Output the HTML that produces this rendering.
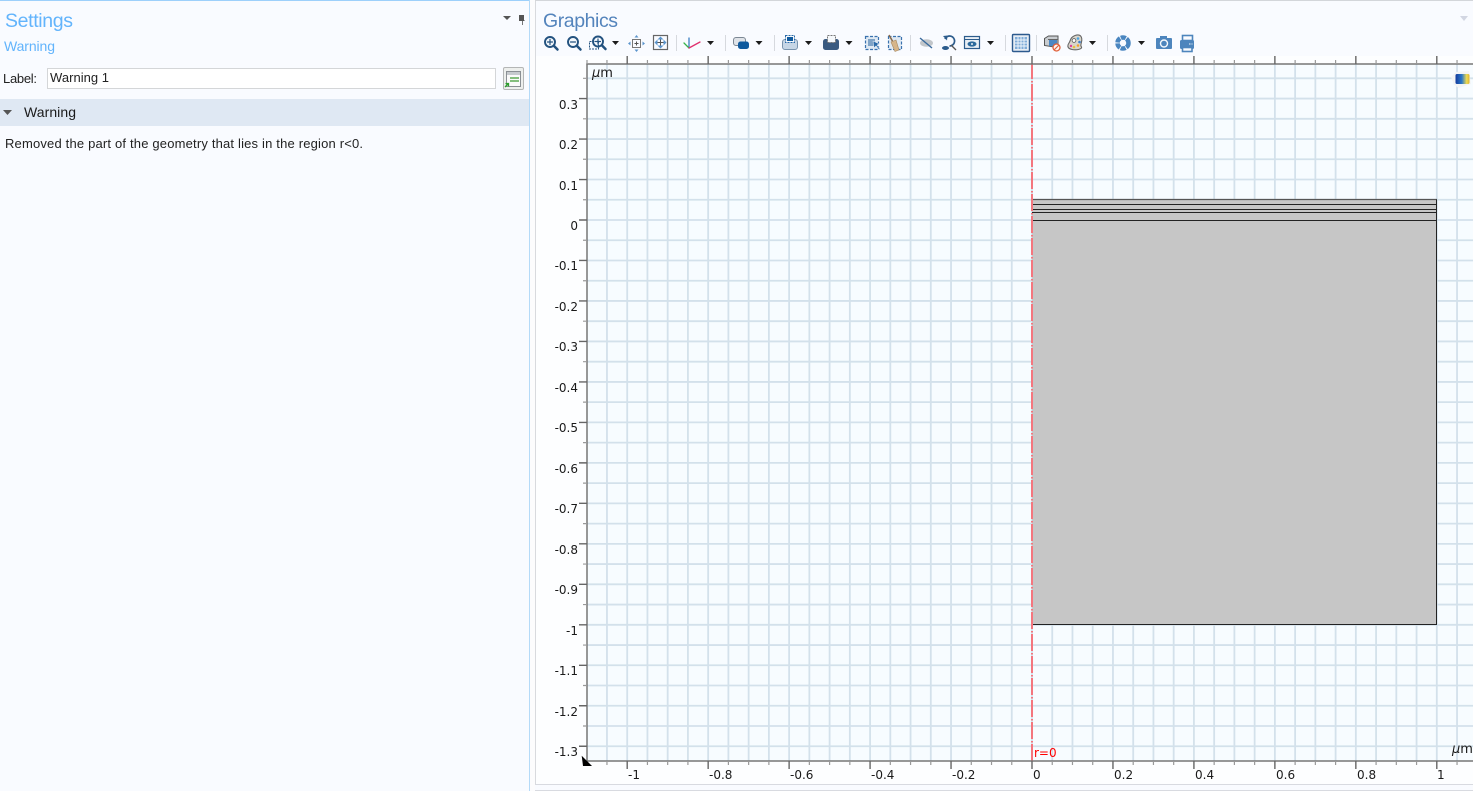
<!DOCTYPE html>
<html><head><meta charset="utf-8"><title>Settings / Graphics</title>
<style>
html,body{margin:0;padding:0;background:#f9fbff;overflow:hidden}
svg{display:block}
.s{font-family:"Liberation Sans",sans-serif}
.d{font-family:"DejaVu Sans",sans-serif;font-size:12px;fill:#1a1a1a}
</style></head><body>
<svg width="1473" height="791" viewBox="0 0 1473 791" xmlns="http://www.w3.org/2000/svg">
<defs><linearGradient id="lg" x1="0" x2="1" y1="0" y2="0"><stop offset="0" stop-color="#123a9c"/><stop offset=".45" stop-color="#2a78c8"/><stop offset=".8" stop-color="#f0dc50"/><stop offset="1" stop-color="#d8b030"/></linearGradient></defs>
<rect width="1473" height="791" fill="#f9fbff"/>
<!-- left panel -->
<rect x="0" y="0" width="530" height="1" fill="#9dd0fb"/>
<rect x="529" y="0" width="1" height="791" fill="#b4daf8"/>
<rect x="530" y="0" width="5" height="791" fill="#fcfcfd"/>
<text class="s" x="5" y="27" font-size="19.5" fill="#62b4fc" textLength="68">Settings</text>
<text class="s" x="4" y="51" font-size="14" fill="#62b4fc" textLength="51">Warning</text>
<text class="s" x="3" y="83" font-size="13" fill="#222" textLength="34">Label:</text>
<rect x="47.500" y="68.500" width="448" height="20" fill="#fff" stroke="#d4d6d8"/>
<text class="s" x="50" y="82" font-size="13" fill="#222" textLength="59">Warning 1</text>
<rect x="503.500" y="67.500" width="20" height="22" rx="1.500" fill="#edefed" stroke="#b4b6b6"/>
<rect x="506.500" y="71.500" width="14" height="15" fill="#fafafa" stroke="#8a8f94"/>
<rect x="507" y="72" width="13" height="3" fill="#c6cace"/>
<path d="M510 78h9M510 81h9" stroke="#3f9a33" stroke-width="1.200"/>
<path d="M505 87l3-3M505.500 83.500h3v3" stroke="#2ca02c" stroke-width="1.300" fill="none"/>
<path d="M503 16h8l-4 4z" fill="#555"/>
<path d="M519 15h5v5l1 1h-2.200v4h-.8v-4h-3z" fill="#555"/>
<rect x="0" y="99" width="529" height="27" fill="#dfe8f3"/>
<path d="M3 110h9l-4.500 5z" fill="#555"/>
<text class="s" x="24" y="117" font-size="14" fill="#1a1a1a" textLength="52">Warning</text>
<text class="s" x="5" y="148" font-size="13" fill="#222" textLength="358">Removed the part of the geometry that lies in the region r&lt;0.</text>

<!-- right panel -->
<rect x="535" y="0" width="938" height="1" fill="#d3d6da"/>
<rect x="536" y="56" width="937" height="728" fill="#fdfeff"/>
<rect x="535" y="1" width="1" height="784" fill="#d8dade"/>
<rect x="535" y="784" width="938" height="1" fill="#d8dae0"/>
<rect x="535" y="790" width="938" height="1" fill="#d8dae0"/>
<text class="s" x="543" y="27" font-size="19.500" fill="#5484bc" textLength="75">Graphics</text>
<path d="M1460 16h8l-4 5z" fill="#d2d6e2"/>

<!-- plot -->
<rect x="587" y="64" width="886" height="697" fill="#f7fcff"/>
<path fill="none" stroke="#d3e1eb" stroke-width="1.800" d="M606.96 64V761M627.2 64V761M647.44 64V761M667.68 64V761M687.92 64V761M708.16 64V761M728.4 64V761M748.64 64V761M768.88 64V761M789.12 64V761M809.36 64V761M829.6 64V761M849.84 64V761M870.08 64V761M890.32 64V761M910.56 64V761M930.8 64V761M951.04 64V761M971.28 64V761M991.52 64V761M1011.76 64V761M1052.24 64V761M1072.48 64V761M1092.72 64V761M1112.96 64V761M1133.2 64V761M1153.44 64V761M1173.68 64V761M1193.92 64V761M1214.16 64V761M1234.4 64V761M1254.64 64V761M1274.88 64V761M1295.12 64V761M1315.36 64V761M1335.6 64V761M1355.84 64V761M1376.08 64V761M1396.32 64V761M1416.56 64V761M1436.8 64V761M1457.04 64V761M1032 64V761
M587 78.32H1473M587 98.56H1473M587 118.8H1473M587 139.04H1473M587 159.28H1473M587 179.52H1473M587 199.76H1473M587 220H1473M587 240.24H1473M587 260.48H1473M587 280.72H1473M587 300.96H1473M587 321.2H1473M587 341.44H1473M587 361.68H1473M587 381.92H1473M587 402.16H1473M587 422.4H1473M587 442.64H1473M587 462.88H1473M587 483.12H1473M587 503.36H1473M587 523.6H1473M587 543.84H1473M587 564.08H1473M587 584.32H1473M587 604.56H1473M587 624.8H1473M587 645.04H1473M587 665.28H1473M587 685.52H1473M587 705.76H1473M587 726H1473M587 746.24H1473"/>

<!-- geometry -->
<rect x="1032" y="199.500" width="404.500" height="425" fill="#c6c6c6"/>
<path d="M1032 199.500H1437" stroke="#555" stroke-width="1.200"/>
<path d="M1032 204.500H1437M1032 209.500H1437M1032 212.500H1437M1032 220.500H1437" stroke="#222" stroke-width="1"/>
<path d="M1032 624.500H1437M1436.500 199.500V625" stroke="#222" stroke-width="1"/>

<!-- r=0 axis -->
<path d="M1032 64V761" stroke="#f4767e" stroke-width="2" stroke-dasharray="17 2 1.500 1.500" stroke-dashoffset="2"/>

<!-- axes -->
<path fill="none" stroke="#777" stroke-width="1.500" d="M587 761V63.500M586.200 64H1473M586.200 761H1473"/>
<!-- minor ticks -->
<path fill="none" stroke="#999" stroke-width="1.200" d="M583 78.32H587M583 118.8H587M583 159.28H587M583 199.76H587M583 240.24H587M583 280.72H587M583 321.2H587M583 361.68H587M583 402.16H587M583 442.64H587M583 483.12H587M583 523.6H587M583 564.08H587M583 604.56H587M583 645.04H587M583 685.52H587M583 726H587
M587 60V64M606.96 60V64M647.44 60V64M667.68 60V64M687.92 60V64M728.4 60V64M748.64 60V64M768.88 60V64M809.36 60V64M829.6 60V64M849.84 60V64M890.32 60V64M910.56 60V64M930.8 60V64M971.28 60V64M991.52 60V64M1011.76 60V64M1052.24 60V64M1072.48 60V64M1092.72 60V64M1133.2 60V64M1153.44 60V64M1173.68 60V64M1214.16 60V64M1234.4 60V64M1254.64 60V64M1295.12 60V64M1315.36 60V64M1335.6 60V64M1376.08 60V64M1396.32 60V64M1416.56 60V64M1457.04 60V64
M606.96 761V765M647.44 761V765M667.68 761V765M687.92 761V765M728.4 761V765M748.64 761V765M768.88 761V765M809.36 761V765M829.6 761V765M849.84 761V765M890.32 761V765M910.56 761V765M930.8 761V765M971.28 761V765M991.52 761V765M1011.76 761V765M1052.24 761V765M1072.48 761V765M1092.72 761V765M1133.2 761V765M1153.44 761V765M1173.68 761V765M1214.16 761V765M1234.4 761V765M1254.64 761V765M1295.12 761V765M1315.36 761V765M1335.6 761V765M1376.08 761V765M1396.32 761V765M1416.56 761V765M1457.04 761V765"/>
<!-- major ticks -->
<path fill="none" stroke="#666" stroke-width="1.400" d="M579 98.56H587M579 139.04H587M579 179.52H587M579 220H587M579 260.48H587M579 300.96H587M579 341.44H587M579 381.92H587M579 422.4H587M579 462.88H587M579 503.36H587M579 543.84H587M579 584.32H587M579 624.8H587M579 665.28H587M579 705.76H587M579 746.24H587
M627.2 56V64M708.16 56V64M789.12 56V64M870.08 56V64M951.04 56V64M1032 56V64M1112.96 56V64M1193.92 56V64M1274.88 56V64M1355.84 56V64M1436.8 56V64
M627.2 761V769M708.16 761V769M789.12 761V769M870.08 761V769M951.04 761V769M1032 761V769M1112.96 761V769M1193.92 761V769M1274.88 761V769M1355.84 761V769M1436.8 761V769"/>
<path d="M581.700 755.700L592 766H583z" fill="#000"/>

<!-- y labels -->
<g class="d" text-anchor="end">
<text x="578" y="109">0.3</text>
<text x="578" y="149">0.2</text>
<text x="578" y="190">0.1</text>
<text x="578" y="230">0</text>
<text x="578" y="270">-0.1</text>
<text x="578" y="311">-0.2</text>
<text x="578" y="351">-0.3</text>
<text x="578" y="392">-0.4</text>
<text x="578" y="432">-0.5</text>
<text x="578" y="473">-0.6</text>
<text x="578" y="513">-0.7</text>
<text x="578" y="554">-0.8</text>
<text x="578" y="594">-0.9</text>
<text x="578" y="635">-1</text>
<text x="578" y="675">-1.1</text>
<text x="578" y="716">-1.2</text>
<text x="578" y="756">-1.3</text>
</g>
<!-- x labels -->
<g class="d">
<text x="628" y="779">-1</text>
<text x="709" y="779">-0.8</text>
<text x="790" y="779">-0.6</text>
<text x="871" y="779">-0.4</text>
<text x="952" y="779">-0.2</text>
<text x="1033" y="779">0</text>
<text x="1114" y="779">0.2</text>
<text x="1195" y="779">0.4</text>
<text x="1276" y="779">0.6</text>
<text x="1357" y="779">0.8</text>
<text x="1437" y="779">1</text>
<text x="592" y="77" font-size="13"><tspan font-style="italic">µ</tspan>m</text>
<text x="1452" y="753" font-size="13"><tspan font-style="italic">µ</tspan>m</text>
</g>
<text x="1034" y="757" font-family="'DejaVu Sans',sans-serif" font-size="12" fill="#f00">r=0</text>

<!-- legend icon -->
<path d="M1451 77l5-5 13-1 2 13-12 4-5-3z" fill="#f3f4f5"/>
<rect x="1455.500" y="74" width="14" height="10" rx="1.500" fill="url(#lg)"/>

<!-- toolbar -->
<g fill="none" stroke-linecap="round">
<!-- zoom in -->
<circle cx="550" cy="42" r="5" stroke="#23527f" stroke-width="1.900" fill="#f4f8fc"/>
<path d="M553.800 45.800L557.500 49.500" stroke="#23527f" stroke-width="2.500"/>
<path d="M547.500 42h5M550 39.500v5" stroke="#23527f" stroke-width="1.200"/>
<!-- zoom out -->
<circle cx="573" cy="42" r="5" stroke="#23527f" stroke-width="1.900" fill="#f4f8fc"/>
<path d="M576.800 45.800L580.500 49.500" stroke="#23527f" stroke-width="2.500"/>
<path d="M570.500 42h5" stroke="#23527f" stroke-width="1.200"/>
<!-- zoom box -->
<rect x="589.500" y="41.500" width="9" height="7.500" stroke="#23527f" stroke-dasharray="2 1" stroke-linecap="butt"/>
<circle cx="598" cy="41.500" r="5" stroke="#23527f" stroke-width="1.900"/>
<path d="M601.800 45.300L605.500 49" stroke="#23527f" stroke-width="2.500"/>
<path d="M595.500 41.500h5M598 39v5" stroke="#23527f" stroke-width="1.200"/>
<!-- zoom to window -->
<rect x="632.500" y="39.500" width="8" height="8" stroke="#777"/>
<path d="M634.500 43.500h4M636.500 41.500v4" stroke="#555" stroke-linecap="butt"/>
<!-- zoom extents -->
<rect x="653.500" y="35.500" width="14" height="14" stroke="#666" stroke-width="1.200"/>
<path d="M657 42.500h7M660.500 39v7" stroke="#555" stroke-linecap="butt"/>
<!-- axes -->
<path d="M689 48V38" stroke="#3a7fc4" stroke-width="1.300"/>
<path d="M689 48l-5-5" stroke="#37b34a" stroke-width="1.300"/>
<path d="M689 48l11-6" stroke="#e0306e" stroke-width="1.300"/>
</g>
<!-- arrows for zoom extents -->
<g fill="#5a94cc">
<path d="M636.500 35l2 2.500h-4zM636.500 52l2-2.500h-4zM628 43.500l2.500-2v4zM645 43.500l-2.500-2v4z"/>
<path d="M660.500 36.500l3 3h-6zM660.500 48.500l3-3h-6zM654.500 42.500l3-3v6zM666.500 42.500l-3-3v6z"/>
</g>
<!-- dropdown arrows -->
<g fill="#1c1c1c">
<path d="M612 41h7l-3.500 4z"/><path d="M707 41h7l-3.500 4z"/><path d="M755.500 41h7l-3.500 4z"/>
<path d="M805 41h7l-3.500 4z"/><path d="M845.500 41h7l-3.500 4z"/><path d="M987 41h7l-3.500 4z"/>
<path d="M1089 41h7l-3.500 4z"/><path d="M1138 41h7l-3.500 4z"/>
</g>
<!-- separators -->
<g fill="#d6d9de">
<rect x="676" y="35" width="1" height="16"/><rect x="725" y="35" width="1" height="16"/><rect x="774" y="35" width="1" height="16"/>
<rect x="910" y="35" width="1" height="16"/><rect x="1005" y="35" width="1" height="16"/><rect x="1036" y="35" width="1" height="16"/><rect x="1107" y="35" width="1" height="16"/>
</g>
<!-- 742 -->
<rect x="733.500" y="37.500" width="12" height="8" rx="2.500" fill="#dfe3e8" stroke="#7c8894"/>
<rect x="738" y="41.500" width="11" height="7.500" rx="2.500" fill="#0f5a9e"/>
<!-- 790 -->
<rect x="782.500" y="39.500" width="15" height="10" rx="2.500" fill="#c6d6e6" stroke="#7a94ae"/>
<rect x="785.500" y="35.500" width="9" height="7" fill="#f5f8fb" stroke="#2a6aa8" stroke-dasharray="2 1"/>
<rect x="787" y="37" width="6" height="4" fill="#0f5a9e"/>
<!-- 832 -->
<rect x="823" y="39" width="16" height="11" rx="2.500" fill="#3a5a80"/>
<rect x="827.500" y="35.500" width="8" height="7" fill="#f5f8fb" stroke="#777" stroke-dasharray="2 1"/>
<!-- select 872 -->
<rect x="865.500" y="36.500" width="13" height="13" fill="#dfe9f3" stroke="#3a72ae" stroke-width="1.200" stroke-dasharray="3 1.500"/>
<rect x="868" y="39" width="7" height="7" fill="#7fa3c6"/>
<path d="M873 41l6.500 3-2.500 1 3 4-1 .800-3-4-2 2z" fill="#2a6aa8" stroke="#f4f8fc" stroke-width=".5"/>
<!-- broom 895 -->
<rect x="888.500" y="36.500" width="13" height="13" fill="#dfe9f3" stroke="#3a72ae" stroke-width="1.200" stroke-dasharray="3 1.500"/>
<path d="M889 35l4 7" stroke="#8a6a4a" stroke-width="1.500"/>
<path d="M891 42l5-2 3 10-4 1.500z" fill="#d6b58a" stroke="#a98a60" stroke-width=".6"/>
<!-- hide 926 -->
<ellipse cx="926.500" cy="43" rx="6.500" ry="3.800" fill="#c2c6ca"/>
<path d="M920 38l12 10" stroke="#3a6a9c" stroke-width="1.400"/>
<!-- reset hide 949 -->
<path d="M945 39a5 5 0 1 1 4.500 7" fill="none" stroke="#2c5c8c" stroke-width="1.700"/>
<path d="M943 36l4.500-.5-.5 5z" fill="#2c5c8c"/>
<ellipse cx="945.500" cy="48" rx="3.500" ry="2" fill="#2c5c8c"/>
<path d="M951 45l5 5" stroke="#555" stroke-width="1.300"/>
<!-- views 972 -->
<rect x="964.500" y="36.500" width="15" height="12" fill="#e9eff5" stroke="#2c5c8c" stroke-width="1.200"/>
<path d="M965 39.500h14" stroke="#2c5c8c"/>
<ellipse cx="972" cy="44" rx="4.500" ry="2.600" fill="#2c6a9c"/>
<circle cx="972" cy="44" r="1" fill="#e9eff5"/>
<!-- grid 1021 -->
<rect x="1012.500" y="34.500" width="17" height="17" rx="1" fill="#e6edf4" stroke="#2c5a8e" stroke-width="1.400"/>
<rect x="1015" y="37" width="12" height="12" fill="#7facd8"/>
<path d="M1018 37v12M1021 37v12M1024 37v12M1015 40h12M1015 43h12M1015 46h12" stroke="#f0f6fc" stroke-width=".9"/>
<!-- box 1051 -->
<path d="M1044.500 38.500l4-2.500h9.500v8l-4 3-9.500-1.500z" fill="#c8ccd0" stroke="#555"/>
<path d="M1048 39.500h10" stroke="#666"/>
<rect x="1049" y="40" width="8" height="6" fill="#4a88c4"/>
<circle cx="1056.500" cy="47.500" r="3.500" fill="#fdf6f2" stroke="#e0603a" stroke-width="1.300"/>
<path d="M1054 50l5-5" stroke="#e0603a" stroke-width="1.200"/>
<!-- palette 1075 -->
<path d="M1075 35.500c6-2 7.500 2 6.500 6.500s-1 3 0 5-5 3.500-9.500 2.500-5-3.500-3-6.500 1-5.500 6-7.500z" fill="#d9d6cc" stroke="#666" stroke-width="1.100"/>
<circle cx="1074" cy="40.500" r="1.900" fill="#fdfdfd" stroke="#555" stroke-width=".8"/>
<circle cx="1078" cy="38.500" r="1.300" fill="#4aa3e0"/>
<circle cx="1079.500" cy="42" r="1.300" fill="#3a7fd0"/>
<circle cx="1078" cy="45.500" r="1.300" fill="#f0a030"/>
<circle cx="1074" cy="47" r="1.300" fill="#e8c040"/>
<circle cx="1071" cy="46" r="1.200" fill="#e0409a"/>
<!-- aperture 1123 -->
<circle cx="1123" cy="43" r="5.500" fill="none" stroke="#4a86c0" stroke-width="4.500" stroke-dasharray="5 .9"/>
<circle cx="1123" cy="43" r="2.600" fill="#f9fbff"/>
<!-- camera 1164 -->
<rect x="1156" y="38" width="16" height="11" rx="1" fill="#4d85bd"/>
<rect x="1160" y="36" width="7" height="3" fill="#4d85bd"/>
<circle cx="1164" cy="43.500" r="3.500" fill="#4d85bd" stroke="#f4f8fc" stroke-width="1.400"/>
<!-- printer 1187 -->
<rect x="1182.500" y="35.500" width="10" height="5" fill="#f9fbff" stroke="#4d85bd" stroke-width="1.600"/>
<rect x="1180" y="40" width="14" height="9" rx="1.500" fill="#4d85bd"/>
<rect x="1182.500" y="47.500" width="9.500" height="4" fill="#f9fbff" stroke="#4d85bd" stroke-width="1.600"/>
<path d="M1189 44h1.500M1191.500 44h1" stroke="#f4f8fc"/>
</svg>
</body></html>
